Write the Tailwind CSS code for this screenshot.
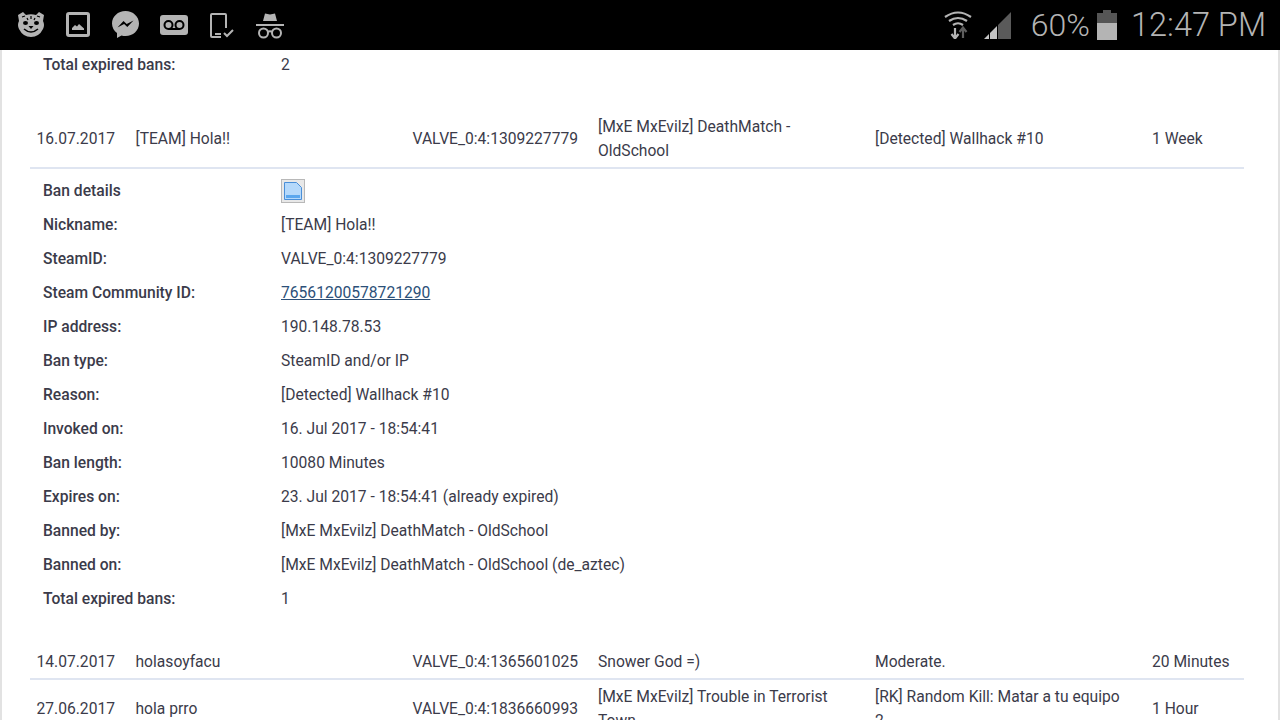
<!DOCTYPE html>
<html><head><meta charset="utf-8"><script src="https://cdn.jsdelivr.net/npm/@tailwindcss/browser@4"></script></head>
<body class="bg-white">
<div class="w-[1280px] h-[720px] overflow-hidden flex flex-col bg-white font-['Roboto',sans-serif] text-[15.630px] leading-[24px] text-[#3b3b4a]">
  <div class="h-[50px] shrink-0 bg-black flex items-center justify-between text-[#b4b4b4]">
    <div class="flex items-center pl-[17px]">
      <svg width="28" height="26" viewBox="0 0 28 26"><path d="M1 3 L6 0 L9 3 Q14 1.500 19 3 L22 0 L27 3 L26 9 Q28 13 26 17 Q22 25 14 25 Q6 25 2 17 Q0 13 2 9z" fill="#b4b4b4"/><path d="M5 5l3-1M20 4l3 1M10 6l1 2M18 6l-1 2M14 4v3" stroke="#000" stroke-width="1.200" fill="none"/><ellipse cx="8.500" cy="11" rx="2.500" ry="2" fill="#000"/><ellipse cx="19.500" cy="11" rx="2.500" ry="2" fill="#000"/><path d="M11.500 14h5l-2.500 3z" fill="#000"/><path d="M7 17q7 6 14 0" fill="none" stroke="#000" stroke-width="1.600"/></svg>
      <svg class="ml-[21px]" width="24" height="26" viewBox="0 0 24 26"><rect x="1.500" y="1.500" width="21" height="22" rx="1.500" fill="none" stroke="#b4b4b4" stroke-width="3"/><path d="M6 18v-2l3-3 2 1.500 2-2.500 5 4.500v1.500z" fill="#b4b4b4"/></svg>
      <svg class="ml-[22px]" width="27" height="28" viewBox="0 0 27 28"><path d="M13.500 0C6 0 0 5.500 0 12.500c0 4 2 7.300 5 9.500v5l4.500-2.500c1.300.4 2.600.5 4 .5C21 25 27 19.500 27 12.500S21 0 13.500 0z" fill="#b4b4b4"/><path d="M5.500 16.500l6-6.500 3.200 3 6.800-3.500-6.200 6.500-3.200-3z" fill="#000"/></svg>
      <svg class="ml-[21px]" width="28" height="20" viewBox="0 0 28 20"><rect width="28" height="20" rx="3" fill="#b4b4b4"/><circle cx="8.500" cy="10" r="4" fill="none" stroke="#000" stroke-width="2"/><circle cx="19.500" cy="10" r="4" fill="none" stroke="#000" stroke-width="2"/><path d="M8.500 14h11" stroke="#000" stroke-width="2"/></svg>
      <svg class="ml-[22px]" width="24" height="25" viewBox="0 0 24 25" fill="none" stroke="#b4b4b4" stroke-width="2"><path d="M11 24H2a1 1 0 0 1-1-1V2a1 1 0 0 1 1-1h13a1 1 0 0 1 1 1v13"/><path d="M5 21h6"/><path d="M14 20l3 3 6-6"/></svg>
      <svg class="ml-[22px]" width="28" height="27" viewBox="0 0 28 27"><path d="M7 9L9 1.500 14 2.500 19 1.500 21 9z" fill="#b4b4b4"/><path d="M0 13h28" stroke="#b4b4b4" stroke-width="2"/><circle cx="7.500" cy="21" r="4.500" fill="none" stroke="#b4b4b4" stroke-width="2"/><circle cx="20.500" cy="21" r="4.500" fill="none" stroke="#b4b4b4" stroke-width="2"/><path d="M11.500 20q2.500-1.500 5 0" fill="none" stroke="#b4b4b4" stroke-width="2"/></svg>
    </div>
    <div class="flex items-center pr-[14px]">
      <svg width="28" height="28" viewBox="0 0 28 28" fill="none" stroke="#b4b4b4" stroke-width="2.200"><path d="M1 6Q14-3 27 6M5 10q9-6 18 0M9 14q5-3.500 10 0"/><path d="M11 17v10M7.500 23l3.500 4.500 3.500-4.500" /><path d="M19 27V17M15.500 21l3.500-4.500 3.500 4.500" stroke="#5e5e5e"/></svg>
      <svg class="ml-[12px]" width="27" height="27" viewBox="0 0 27 27"><path d="M27 0v27H14V13z" fill="#5a5a5a"/><path d="M13 14v13H6v-6z" fill="#c4c4c4"/><path d="M5 22v5H0z" fill="#c4c4c4"/></svg>
      <span class="ml-[20px] text-[32px] leading-[50px] font-light">60%</span>
      <svg class="ml-[7px]" width="20" height="30" viewBox="0 0 20 30"><path d="M6 0h8v3h6v10H0V3h6z" fill="#555"/><rect y="13" width="20" height="17" fill="#b4b4b4"/></svg>
      <span class="ml-[14px] text-[32.500px] leading-[50px] font-light whitespace-nowrap">12:47 PM</span>
    </div>
  </div>
  <div class="flex-1 overflow-hidden border-l-2 border-r-2 border-[#e2e2e2] pl-[28px] pr-[34px] w-full">
    <div class="h-[28px] flex items-center pl-[13px] pt-[1px]"><span class="w-[238px] font-medium">Total expired bans:</span><span>2</span></div>
    <div class="mt-[36px] flex items-center h-[55px] border-b-2 border-[#dfe5f1] pl-[6.500px] pb-[3px]">
      <span class="w-[99px]">16.07.2017</span><span class="w-[277px]">[TEAM] Hola!!</span><span class="w-[185.500px]">VALVE_0:4:1309227779</span><span class="w-[277px] pr-[60px]">[MxE MxEvilz] DeathMatch - OldSchool</span><span class="w-[277px]">[Detected] Wallhack #10</span><span>1 Week</span>
    </div>
    <div class="pl-[13px] pt-[5px]">
      <div class="h-[34px] flex items-center"><span class="w-[238px] font-medium">Ban details</span>
        <svg width="24" height="24" viewBox="0 0 24 24"><rect x=".5" y=".5" width="23" height="23" fill="#e8e8e8" stroke="#b8b8b8"/><path d="M3.500 3.500h12l5 5v12h-17z" fill="#b5d9fb" stroke="#4a8fd8"/><rect x="5" y="16" width="14" height="3" fill="#5ba7ee"/></svg>
      </div>
      <div class="h-[34px] flex items-center"><span class="w-[238px] font-medium">Nickname:</span><span>[TEAM] Hola!!</span></div>
      <div class="h-[34px] flex items-center"><span class="w-[238px] font-medium">SteamID:</span><span>VALVE_0:4:1309227779</span></div>
      <div class="h-[34px] flex items-center"><span class="w-[238px] font-medium">Steam Community ID:</span><a class="underline text-[#2c5078]" href="#">76561200578721290</a></div>
      <div class="h-[34px] flex items-center"><span class="w-[238px] font-medium">IP address:</span><span>190.148.78.53</span></div>
      <div class="h-[34px] flex items-center"><span class="w-[238px] font-medium">Ban type:</span><span>SteamID and/or IP</span></div>
      <div class="h-[34px] flex items-center"><span class="w-[238px] font-medium">Reason:</span><span>[Detected] Wallhack #10</span></div>
      <div class="h-[34px] flex items-center"><span class="w-[238px] font-medium">Invoked on:</span><span>16. Jul 2017 - 18:54:41</span></div>
      <div class="h-[34px] flex items-center"><span class="w-[238px] font-medium">Ban length:</span><span>10080 Minutes</span></div>
      <div class="h-[34px] flex items-center"><span class="w-[238px] font-medium">Expires on:</span><span>23. Jul 2017 - 18:54:41 (already expired)</span></div>
      <div class="h-[34px] flex items-center"><span class="w-[238px] font-medium">Banned by:</span><span>[MxE MxEvilz] DeathMatch - OldSchool</span></div>
      <div class="h-[34px] flex items-center"><span class="w-[238px] font-medium">Banned on:</span><span>[MxE MxEvilz] DeathMatch - OldSchool (de_aztec)</span></div>
      <div class="h-[34px] flex items-center"><span class="w-[238px] font-medium">Total expired bans:</span><span>1</span></div>
    </div>
    <div class="mt-[29px] flex items-center h-[35px] border-b-2 border-[#dfe5f1] pl-[6.500px]">
      <span class="w-[99px]">14.07.2017</span><span class="w-[277px]">holasoyfacu</span><span class="w-[185.500px]">VALVE_0:4:1365601025</span><span class="w-[277px]">Snower God =)</span><span class="w-[277px]">Moderate.</span><span>20 Minutes</span>
    </div>
    <div class="flex items-center h-[57px] pl-[6.500px]">
      <span class="w-[99px]">27.06.2017</span><span class="w-[277px]">hola prro</span><span class="w-[185.500px]">VALVE_0:4:1836660993</span><span class="w-[277px] pr-[30px]">[MxE MxEvilz] Trouble in Terrorist Town</span><span class="w-[277px] pr-[30px]">[RK] Random Kill: Matar a tu equipo 2</span><span>1 Hour</span>
    </div>
  </div>
</div>
</body></html>
